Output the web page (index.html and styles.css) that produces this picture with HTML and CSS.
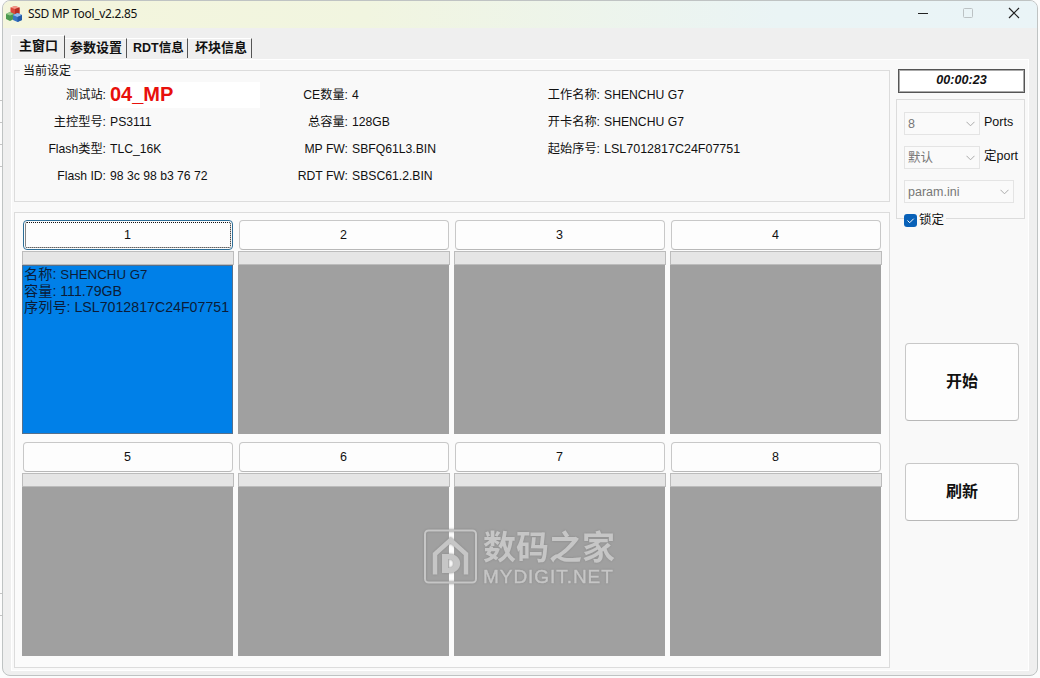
FILE: index.html
```html
<!DOCTYPE html>
<html lang="zh-Hans">

<head>
    <meta charset="utf-8">
    <title>SSD MP Tool_v2.2.85</title>
    <link rel="stylesheet" href="styles.css">
</head>

<body>
    <div class="behind"><i></i><i></i><i></i><i></i><i></i><i></i></div>
    <div class="window">
        <header class="titlebar">
            <svg class="appicon" viewBox="0 0 16 16" width="16" height="16">
                <path d="M4.500 1.500L9 0l4.500 1.500v6L9 9.500l-4.500-2z" fill="#d9483b" />
                <path d="M4.500 1.500L9 0l4.500 1.500L9 3z" fill="#f2988a" />
                <path d="M9 3l4.500-1.500v6L9 9.500z" fill="#b52d25" />
                <path d="M0 8l4-2 4 2v5l-4 2-4-2z" fill="#4c9a50" />
                <path d="M0 8l4-2 4 2-4 1.500z" fill="#9acb8c" />
                <path d="M7 9l4.500-2L16 9v5l-4.500 2L7 14z" fill="#3975c4" />
                <path d="M7 9l4.500-2L16 9l-4.500 2z" fill="#95bdec" />
                <path d="M11.500 11L16 9v5l-4.500 2z" fill="#245aa7" />
            </svg>
            <h1>SSD MP Tool_v2.2.85</h1>
            <svg class="winbtns" width="104" height="14" viewBox="0 0 104 14" fill="none">
                <path d="M0 6.500h10" stroke="#222" />
                <rect x="45.500" y="1.500" width="9" height="9" rx="1" stroke="#bcc2c4" />
                <path d="M91 1l10 10M101 1L91 11" stroke="#222" stroke-width="1.2" />
            </svg>
        </header>

        <nav class="tabs">
            <a class="tab active">主窗口</a>
            <a class="tab">参数设置</a>
            <a class="tab">RDT信息</a>
            <a class="tab">坏块信息</a>
        </nav>

        <main class="page">
            <div class="left">
                <section class="settings">
                    <h2>当前设定</h2>
                    <div class="fields">
                        <label>测试站:</label><b class="station">04_MP</b>
                        <label>CE数量:</label><span>4</span>
                        <label>工作名称:</label><span>SHENCHU G7</span>
                        <label>主控型号:</label><span>PS3111</span>
                        <label>总容量:</label><span>128GB</span>
                        <label>开卡名称:</label><span>SHENCHU G7</span>
                        <label>Flash类型:</label><span>TLC_16K</span>
                        <label>MP FW:</label><span>SBFQ61L3.BIN</span>
                        <label>起始序号:</label><span class="serial">LSL7012817C24F07751</span>
                        <label>Flash ID:</label><span>98 3c 98 b3 76 72</span>
                        <label>RDT FW:</label><span>SBSC61.2.BIN</span>
                    </div>
                </section>

                <section class="ports">
                    <div class="port">
                        <button class="focused">1</button>
                        <div class="bar"></div>
                        <div class="info busy">
                            <p>名称: <span class="name">SHENCHU G7</span></p>
                            <p>容量: 111.79GB</p>
                            <p>序列号: LSL7012817C24F07751</p>
                        </div>
                    </div>
                    <div class="port"><button>2</button><div class="bar"></div><div class="info"></div></div>
                    <div class="port"><button>3</button><div class="bar"></div><div class="info"></div></div>
                    <div class="port"><button>4</button><div class="bar"></div><div class="info"></div></div>
                    <div class="port"><button>5</button><div class="bar"></div><div class="info"></div></div>
                    <div class="port"><button>6</button><div class="bar"></div><div class="info"></div></div>
                    <div class="port"><button>7</button><div class="bar"></div><div class="info"></div></div>
                    <div class="port"><button>8</button><div class="bar"></div><div class="info"></div></div>

                    <!-- 浮水印 -->
                    <div class="watermark">
                        <svg width="54" height="56" viewBox="0 0 54 56" fill="none" stroke="#c6c6c6">
                            <rect x="1" y="2.500" width="51" height="52" rx="3.500" stroke-width="2" />
                            <path d="M11 46.500V26L26.500 12 42 26v20.500" stroke-width="4.500" />
                            <path d="M18 26h7c15 0 15 19 0 19h-7zM24.500 31v9h1c5.500 0 5.500-9 0-9z" fill="#c6c6c6" fill-rule="evenodd" stroke="none" />
                        </svg>
                        <div>
                            <p class="wm-name">数码之家</p>
                            <p class="wm-site">MYDIGIT.NET</p>
                        </div>
                    </div>
                </section>
            </div>

            <aside class="side">
                <div class="timer">00:00:23</div>
                <div class="options">
                    <div class="row">
                        <div class="select">8<svg width="9" height="6" viewBox="0 0 9 6"><path d="M.5.8l4 4 4-4" /></svg></div>
                        <span>Ports</span>
                    </div>
                    <div class="row">
                        <div class="select">默认<svg width="9" height="6" viewBox="0 0 9 6"><path d="M.5.8l4 4 4-4" /></svg></div>
                        <span>定port</span>
                    </div>
                    <div class="row">
                        <div class="select wide">param.ini<svg width="9" height="6" viewBox="0 0 9 6"><path d="M.5.8l4 4 4-4" /></svg></div>
                    </div>
                    <div class="lock">
                        <svg width="13" height="13" viewBox="0 0 13 13">
                            <rect width="13" height="13" rx="3" fill="#0861b8" />
                            <path d="M3.500 6.500l2.200 2.200 4-4" fill="none" stroke="#fff" />
                        </svg>
                        <span>锁定</span>
                    </div>
                </div>
                <button class="start">开始</button>
                <button class="refresh">刷新</button>
            </aside>
        </main>
    </div>
</body>

</html>
```
FILE: styles.css
```css
* {
    box-sizing: border-box;
}

body {
    margin: 0;
    height: 678px;
    display: flex;
    overflow: hidden;
    background: #fcfcfc;
    font: 12.5px/16px "Liberation Sans", "Noto Sans CJK SC", sans-serif;
    color: #111;
}

h1, h2, p {
    margin: 0;
    font-weight: normal;
}

button {
    padding: 0;
    border: 1px solid #c8c8c8;
    border-bottom-color: #b8b8b8;
    border-radius: 4px;
    background: #fdfdfd;
    font: inherit;
    color: #111;
}

/* 視窗後方露出的邊 */
.behind {
    width: 2px;
    padding-top: 100px;
    display: flex;
    flex-direction: column;
    gap: 21px;
}

.behind i {
    height: 1px;
    background: #c4c4c4;
}

.behind i:nth-child(5) {
    margin-top: 405px;
}

.window {
    width: 1036px;
    height: 676px;
    border: 1px solid #bfc3c3;
    border-radius: 8px;
    background: #efefef;
    overflow: hidden;
}

/* 標題列 */
.titlebar {
    height: 27px;
    display: flex;
    align-items: center;
    padding: 0 15px 2px 3px;
    background: linear-gradient(90deg, #f4f5dc, #f1f5e0 35%, #eaf4f5 75%, #eaf4f7);
}

.titlebar h1 {
    flex: 1;
    margin-left: 6px;
    font: 12px/16px "Noto Sans", sans-serif;
    letter-spacing: -0.32px;
}

/* 分頁 */
.tabs {
    height: 31px;
    display: flex;
    align-items: flex-end;
    padding: 0 0 1px 8px;
}

.tab {
    height: 20px;
    padding: 0 4px 0 5px;
    border-top: 1px solid #fff;
    border-right: 1px solid #555;
    font-size: 13px;
    line-height: 18px;
    font-weight: bold;
    white-space: nowrap;
    width: 62px;
}

.tab.active {
    width: 54px;
    height: 23px;
    padding-left: 7px;
    border-left: 1px solid #fff;
    line-height: 20px;
}

.tab:nth-child(n+3) {
    padding-left: 6px;
}

.tab:nth-child(3) {
    width: 61px;
    font-size: 12.5px;
}

.tab:nth-child(4) {
    width: 64px;
    padding-left: 7px;
}

.page {
    display: flex;
    width: 1018px;
    height: 612px;
    margin-left: 8px;
    padding: 9px 3px 0 3px;
    border: 1px solid #fff;
    background: #f9f9f9;
}

.left {
    width: 876px;
    margin-left: -1px;
}

/* 當前設定 */
.settings {
    height: 132px;
    margin-top: 1px;
    border: 1px solid #dcdcdc;
}

.settings h2 {
    width: 54px;
    height: 16px;
    margin: -8px 0 0 5px;
    padding-left: 3px;
    background: #f9f9f9;
    font-size: 12px;
    white-space: nowrap;
}

.fields {
    display: grid;
    grid-template-columns: 91px 150px 84px 150px 94px 200px;
    grid-auto-rows: 27px;
    column-gap: 4px;
    align-items: center;
    margin-top: 2px;
    font-size: 12.2px;
    white-space: nowrap;
}

.fields label {
    text-align: right;
}

.fields .serial {
    font-size: 12.5px;
}

.fields .station {
    height: 26px;
    background: #fff;
    color: #e8100c;
    font-size: 20px;
    line-height: 24px;
}

/* 各埠狀態 */
.ports {
    position: relative;
    display: grid;
    grid-template-columns: repeat(4, 212px);
    column-gap: 4px;
    row-gap: 8px;
    align-content: start;
    height: 456px;
    margin-top: 10px;
    padding: 7px;
    border: 1px solid #dcdcdc;
    background: #fbfbfb;
}

.port button {
    display: block;
    width: 210px;
    height: 30px;
    margin: 0 1px;
    padding-right: 1px;
}

.port .focused {
    border-color: #2d6d96;
    outline: 1px dotted #111;
    outline-offset: -3px;
}

.bar {
    height: 14px;
    margin-top: 1px;
    border: 1px solid #bcbcbc;
    background: #e5e5e5;
}

.info {
    width: 211px;
    height: 169px;
    background: #a0a0a0;
    font-size: 14.2px;
    line-height: 16px;
    color: #0b1c38;
    white-space: nowrap;
}

.info.busy {
    padding-left: 1px;
    border: 1px solid #55708c;
    background: #0080e8;
}

.info .name {
    font-size: 13.3px;
}

/* 浮水印 */
.watermark {
    position: absolute;
    left: 409px;
    top: 315px;
    display: flex;
    gap: 5px;
    color: #c6c6c6;
    filter: drop-shadow(0 0 1px #888);
}

.wm-name {
    height: 38px;
    font: bold 33px/34px "Noto Sans CJK SC", sans-serif;
}

.wm-site {
    font-size: 19px;
    line-height: 22px;
    letter-spacing: 0.95px;
    -webkit-text-stroke: 0.4px #c6c6c6;
}

/* 右側 */
.side {
    width: 130px;
    margin-left: 6px;
}

.timer {
    width: 127px;
    height: 24px;
    margin-left: 2px;
    border: 1px solid #555;
    outline: 1px solid #aaa;
    outline-offset: -2px;
    background: #fff;
    font: italic bold 12.6px/20px "Liberation Sans", sans-serif;
    text-align: center;
}

.options {
    height: 120px;
    margin-top: 6px;
    padding: 12px 0 0 7px;
    border: 1px solid #dcdcdc;
}

.row {
    display: flex;
    gap: 4px;
    height: 34px;
}

.row span {
    margin-top: 2px;
    white-space: nowrap;
}

.select {
    display: flex;
    align-items: center;
    justify-content: space-between;
    width: 76px;
    height: 23px;
    padding: 0 4px 0 3px;
    border: 1px solid #e4e4e4;
    background: #fafafa;
    color: #777;
}

.select.wide {
    width: 110px;
}

.select path {
    fill: none;
    stroke: #aaa;
}

.lock {
    display: flex;
    align-items: center;
    gap: 2px;
    width: 42px;
    height: 16px;
    margin-top: -2px;
    background: #f9f9f9;
    white-space: nowrap;
}

.side button {
    display: block;
    width: 114px;
    margin-left: 9px;
    font-size: 16px;
    font-weight: bold;
}

.side .start {
    height: 78px;
    margin-top: 124px;
}

.side .refresh {
    height: 58px;
    margin-top: 42px;
}
```
